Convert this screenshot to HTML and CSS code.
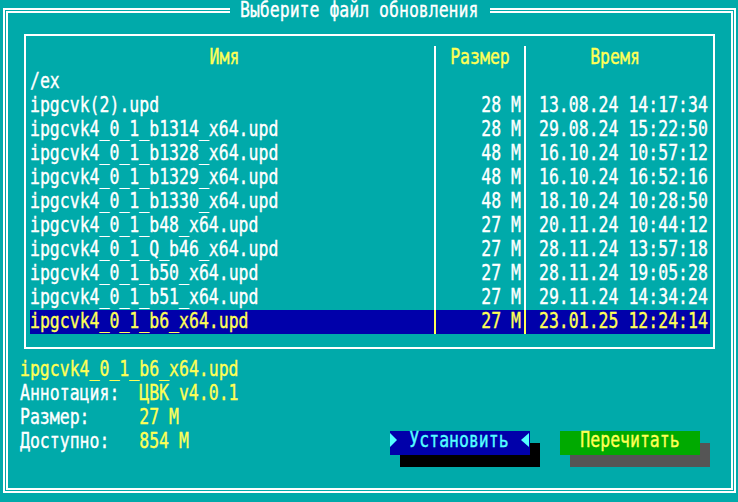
FILE: index.html
```html
<!DOCTYPE html>
<html lang="ru">
<head>
 <meta charset="UTF-8">
 <meta name="viewport" content="width=device-width, initial-scale=1.0">
 <title>Выберите файл обновления</title>
 <link rel="stylesheet" href="styles.css">
</head>
<body>
 <div class="screen">
 <div class="frame">
 <div class="title"><span>Выберите файл обновления</span></div>
 <div class="frame-inner">

 <div class="list">
 <div class="row head">
 <div class="name"><span>Имя</span></div>
 <div class="size"><span>Размер</span></div>
 <div class="time"><span>Время</span></div>
 </div>
 <div class="row">
 <div class="name"><span>/ex</span></div>
 <div class="size"></div>
 <div class="time"></div>
 </div>
 <div class="row">
 <div class="name"><span>ipgcvk(2).upd</span></div>
 <div class="size"><span>28 M</span></div>
 <div class="time"><span>13.08.24 14:17:34</span></div>
 </div>
 <div class="row">
 <div class="name"><span>ipgcvk4_0_1_b1314_x64.upd</span></div>
 <div class="size"><span>28 M</span></div>
 <div class="time"><span>29.08.24 15:22:50</span></div>
 </div>
 <div class="row">
 <div class="name"><span>ipgcvk4_0_1_b1328_x64.upd</span></div>
 <div class="size"><span>48 M</span></div>
 <div class="time"><span>16.10.24 10:57:12</span></div>
 </div>
 <div class="row">
 <div class="name"><span>ipgcvk4_0_1_b1329_x64.upd</span></div>
 <div class="size"><span>48 M</span></div>
 <div class="time"><span>16.10.24 16:52:16</span></div>
 </div>
 <div class="row">
 <div class="name"><span>ipgcvk4_0_1_b1330_x64.upd</span></div>
 <div class="size"><span>48 M</span></div>
 <div class="time"><span>18.10.24 10:28:50</span></div>
 </div>
 <div class="row">
 <div class="name"><span>ipgcvk4_0_1_b48_x64.upd</span></div>
 <div class="size"><span>27 M</span></div>
 <div class="time"><span>20.11.24 10:44:12</span></div>
 </div>
 <div class="row">
 <div class="name"><span>ipgcvk4_0_1_Q_b46_x64.upd</span></div>
 <div class="size"><span>27 M</span></div>
 <div class="time"><span>28.11.24 13:57:18</span></div>
 </div>
 <div class="row">
 <div class="name"><span>ipgcvk4_0_1_b50_x64.upd</span></div>
 <div class="size"><span>27 M</span></div>
 <div class="time"><span>28.11.24 19:05:28</span></div>
 </div>
 <div class="row">
 <div class="name"><span>ipgcvk4_0_1_b51_x64.upd</span></div>
 <div class="size"><span>27 M</span></div>
 <div class="time"><span>29.11.24 14:34:24</span></div>
 </div>
 <div class="row selected">
 <div class="name"><span>ipgcvk4_0_1_b6_x64.upd</span></div>
 <div class="size"><span>27 M</span></div>
 <div class="time"><span>23.01.25 12:24:14</span></div>
 </div>
 </div>

 <div class="bottom">
 <div class="info">
 <div class="file"><span>ipgcvk4_0_1_b6_x64.upd</span></div>
 <div class="props">
 <span>Аннотация:</span><span class="val">ЦВК v4.0.1</span>
 <span>Размер:</span><span class="val">27 M</span>
 <span>Доступно:</span><span class="val">854 M</span>
 </div>
 </div>
 <div class="buttons">
 <div class="btn install"><span>Установить</span></div>
 <div class="btn reload"><span>Перечитать</span></div>
 </div>
 </div>

 </div>
 </div>
 </div>
</body>
</html>
```

FILE: styles.css
```css
body {
margin: 0;
background-color: #00aaaa;
font-family: 'DejaVu Sans Mono', 'Liberation Mono', monospace;
font-size: 16.5px;
line-height: 24px;
color: #ffffff;
}
.screen {
width: 738px;
height: 502px;
overflow: hidden;
padding: 8px 0 0 3px;
box-sizing: border-box;
}
/* tall narrow text-mode glyphs: stretch up from the baseline */
.screen span {
display: inline-block;
white-space: pre;
-webkit-text-stroke: 0.3px currentColor;
transform-origin: 50% 17.7px;
transform: translateY(1px) scaleY(1.33);
}
.frame {
position: relative;
width: 733px;
height: 485px;
box-sizing: border-box;
border: 2px solid #ffffff;
padding: 1px;
}
.frame-inner {
height: 100%;
box-sizing: border-box;
border: 2px solid #ffffff;
}
.title {
position: absolute;
top: -9px;
left: 225px;
height: 18px;
line-height: 14px;
padding: 0 12px 0 10px;
background: #00aaaa;
}
.title span {
transform-origin: 50% 0;
transform: scaleY(1.33);
}
.list {
width: 691px;
height: 315px;
margin: 21px 0 0 16px;
box-sizing: border-box;
border: 2px solid #ffffff;
padding: 10px 3px 0 4px;
}
.row {
display: grid;
grid-template-columns: 404px 90px 186px;
height: 24px;
}
.size {
border-left: 2px solid #ffffff;
text-align: right;
padding-right: 3px;
}
.time {
border-left: 2px solid #ffffff;
padding-left: 13px;
}
.head {
color: #ffff55;
}
.head .name {
text-align: center;
padding-right: 15px;
}
.head .size {
text-align: center;
padding: 0;
}
.head .time {
text-align: center;
padding: 0 6px 0 0;
}
.selected {
background: #0000aa;
color: #ffff55;
}
.selected .size,
.selected .time {
border-color: #ffff55;
}
.bottom {
display: flex;
margin-top: 9px;
}
.info {
flex: 1;
padding-left: 12px;
}
.file {
color: #ffff55;
}
.props {
display: grid;
grid-template-columns: 12ch auto;
}
.props .val {
color: #ffff55;
}
.buttons {
display: flex;
gap: 30px;
margin: 73px 31px 0 0;
}
.btn {
width: 140px;
height: 24px;
line-height: 22px;
padding-bottom: 2px;
box-sizing: border-box;
display: flex;
justify-content: center;
}
.install {
background: #0000aa;
color: #55ffff;
justify-content: space-between;
box-shadow: 10px 12px 0 #000000;
}
.install::before,
.install::after {
content: '';
width: 0;
height: 0;
margin-top: 2px;
border-top: 7.5px solid transparent;
border-bottom: 7.5px solid transparent;
}
.install::before {
border-left: 7px solid #55ffff;
}
.install::after {
border-right: 8px solid #55ffff;
margin-right: 1px;
}
.reload {
background: #00aa00;
color: #ffff55;
box-shadow: 10px 12px 0 #555555;
}
```
